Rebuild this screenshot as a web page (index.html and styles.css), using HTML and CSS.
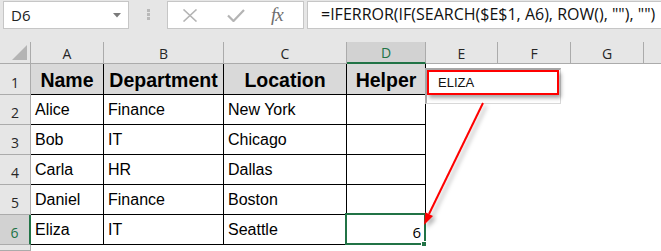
FILE: index.html
```html
<!doctype html>
<html lang="en">
  <head>
    <meta charset="UTF-8" />
    <title>Helper column with SEARCH</title>
    <link rel="stylesheet" href="styles.css">
  </head>
  <body>
    <div class="page">
      <div class="topbar">
        <div class="namebox">
          <span>D6</span>
          <svg width="8" height="5" viewBox="0 0 8 5"><path d="M0 0h8L4 4.5z" fill="#7a7a7a"/></svg>
        </div>
        <div class="grip"><i></i><i></i><i></i></div>
        <div class="fxbox">
          <svg class="ico-x" width="16" height="13" viewBox="0 0 16 13">
            <path d="M1.5 0.5L14.5 12.5M14.5 0.5L1.5 12.5" stroke="#b4b4b4" stroke-width="1.6" fill="none"/>
          </svg>
          <svg class="ico-ok" width="18" height="13" viewBox="0 0 18 13">
            <path d="M1 6.5L6.5 12L17 1" stroke="#b4b4b4" stroke-width="2.2" fill="none"/>
          </svg>
          <span class="fx">fx</span>
        </div>
        <div class="formula">=IFERROR(IF(SEARCH($E$1, A6), ROW(), ""), "")</div>
      </div>

      <div class="sheet">
        <div class="ch corner"><span class="tri"></span></div>
        <div class="ch">A</div>
        <div class="ch">B</div>
        <div class="ch">C</div>
        <div class="ch active">D</div>
        <div class="ch">E</div>
        <div class="ch">F</div>
        <div class="ch">G</div>
        <div class="ch last"></div>

        <div class="rh">1</div>
        <div class="c h">Name</div>
        <div class="c h">Department</div>
        <div class="c h">Location</div>
        <div class="c h">Helper</div>
        <div class="blank"></div>

        <div class="rh">2</div>
        <div class="c">Alice</div>
        <div class="c">Finance</div>
        <div class="c">New York</div>
        <div class="c"></div>
        <div class="blank"></div>

        <div class="rh">3</div>
        <div class="c">Bob</div>
        <div class="c">IT</div>
        <div class="c">Chicago</div>
        <div class="c"></div>
        <div class="blank"></div>

        <div class="rh">4</div>
        <div class="c">Carla</div>
        <div class="c">HR</div>
        <div class="c">Dallas</div>
        <div class="c"></div>
        <div class="blank"></div>

        <div class="rh">5</div>
        <div class="c">Daniel</div>
        <div class="c">Finance</div>
        <div class="c">Boston</div>
        <div class="c"></div>
        <div class="blank"></div>

        <div class="rh active">6</div>
        <div class="c">Eliza</div>
        <div class="c">IT</div>
        <div class="c">Seattle</div>
        <div class="c num">6<span class="sel"><i class="handle"></i></span></div>
        <div class="blank"></div>

        <div class="rh"></div>
        <div class="blank"></div>
      </div>

      <!-- search box in E1 and the callout arrow drawn over the sheet -->
      <div class="tbox">
        <div class="redbox">ELIZA</div>
      </div>
      <svg class="arrow" width="661" height="251" viewBox="0 0 661 251">
        <line x1="483" y1="103" x2="429" y2="214" stroke="#ff0000" stroke-width="2"/>
        <polygon points="424,225 433,216 425.4,212.3" fill="#ff0000"/>
      </svg>
    </div>
  </body>
</html>
```

FILE: styles.css
```css
* {
  box-sizing: border-box;
}
body {
  margin: 0;
  background: #fff;
  font-family: "Liberation Sans", Arial, sans-serif;
}
.page {
  position: relative;
  width: 661px;
  height: 251px;
  overflow: hidden;
}

/* formula bar */
.topbar {
  height: 42px;
  background: #e6e6e6;
  display: flex;
  align-items: flex-start;
  padding: 1px 0 0 3px;
}
.namebox {
  width: 126px;
  height: 28px;
  flex: none;
  background: #fff;
  border: 1px solid #c6c6c6;
  display: flex;
  align-items: center;
  justify-content: space-between;
  padding: 0 7px 0 7px;
  font-family: "Open Sans", sans-serif;
  font-size: 15px;
  color: #222;
}
.grip {
  flex: none;
  margin: 8px 0 0 18px;
  display: flex;
  flex-direction: column;
  gap: 1px;
}
.grip i {
  width: 3px;
  height: 3px;
  background: #b9b9b9;
}
.fxbox {
  flex: none;
  margin-left: 17px;
  width: 137px;
  height: 28px;
  background: #fff;
  border: 1px solid #c6c6c6;
  display: flex;
  align-items: center;
  padding-left: 14px;
}
.ico-ok {
  margin-left: 29px;
}
.fx {
  margin-left: 26px;
  font-family: "Liberation Serif", serif;
  font-style: italic;
  font-size: 19px;
  color: #6e6e6e;
  letter-spacing: -1px;
}
.formula {
  flex: none;
  margin-left: 3px;
  width: 380px;
  height: 28px;
  background: #fff;
  border: 1px solid #c6c6c6;
  padding-left: 13px;
  font-family: "Open Sans", sans-serif;
  font-size: 16px;
  line-height: 25px;
  color: #111;
  white-space: nowrap;
}

/* grid */
.sheet {
  display: grid;
  grid-template-columns: 31px 73px 120px 123px 79px 72px 73px 73px 1fr;
  grid-template-rows: 22px 31px repeat(5, 30px) 1fr;
  height: 209px;
}
.ch {
  background: #e6e6e6;
  border-right: 1px solid #ababab;
  border-bottom: 1px solid #ababab;
  display: flex;
  align-items: center;
  justify-content: center;
  font-family: "Open Sans", sans-serif;
  font-size: 14px;
  color: #262626;
  padding-top: 1px;
}
.ch.last {
  border-right: none;
}
.ch.active {
  background: #d2d2d2;
  border-bottom: 2px solid #217346;
  color: #217346;
}
.corner {
  position: relative;
}
.tri {
  position: absolute;
  right: 3px;
  bottom: 3px;
  width: 0;
  height: 0;
  border-left: 15px solid transparent;
  border-bottom: 15px solid #b4b4b4;
}
.rh {
  background: #e6e6e6;
  border-right: 1px solid #ababab;
  border-bottom: 1px solid #ababab;
  display: flex;
  align-items: flex-end;
  justify-content: center;
  padding-bottom: 2px;
  font-family: "Open Sans", sans-serif;
  font-size: 14px;
  line-height: 18px;
  color: #262626;
}
.rh.active {
  background: #d2d2d2;
  border-right: 2px solid #217346;
  color: #217346;
}
.c {
  position: relative;
  border-right: 1px solid #000;
  border-bottom: 1px solid #000;
  display: flex;
  align-items: flex-end;
  padding: 0 4px 5px 4px;
  font-size: 16px;
  line-height: 18px;
  color: #000;
}
.c.h {
  background: #d9d9d9;
  justify-content: center;
  font-weight: bold;
  font-size: 19.5px;
  line-height: 22px;
  padding-bottom: 3px;
}
.c.num {
  justify-content: flex-end;
  font-family: "Open Sans", sans-serif;
  font-size: 15px;
  padding-bottom: 3px;
}
.sel {
  position: absolute;
  left: -2px;
  top: -2px;
  width: 81px;
  height: 32px;
  border: 2px solid #217346;
}
.handle {
  position: absolute;
  right: -3px;
  bottom: -4px;
  width: 6px;
  height: 6px;
  background: #217346;
  border: 1px solid #fff;
}
.blank {
  grid-column: 6 / -1;
}
.rh + .blank {
  grid-column: 2 / -1;
}

/* overlays */
.tbox {
  position: absolute;
  left: 425px;
  top: 68px;
  width: 136px;
  height: 36px;
  background: #fff;
  border-top: 2px solid #a8a8a8;
  border-left: 2px solid #a8a8a8;
  border-right: 1px solid #d8d8d8;
  border-bottom: 1px solid #d8d8d8;
}
.redbox {
  width: 132px;
  height: 25px;
  border: 2px solid #ff0000;
  box-shadow: 2px 3px 4px rgba(0, 0, 0, 0.35);
  padding: 3px 0 0 9px;
  font-size: 13px;
  line-height: 15px;
  color: #111;
}
.arrow {
  position: absolute;
  left: 0;
  top: 0;
  pointer-events: none;
  filter: drop-shadow(3px 3px 2px rgba(0, 0, 0, 0.3));
}
```
